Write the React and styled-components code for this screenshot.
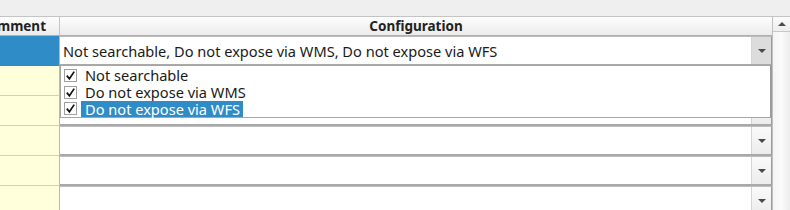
import React from "react";
import styled, { createGlobalStyle } from "styled-components";

const Global = createGlobalStyle`
  html, body { margin: 0; padding: 0; background: #efefef; }
  body { font-family: "Noto Sans", "DejaVu Sans", sans-serif; font-size: 14.6px; color: #1e1e1e; }
`;

const Page = styled.div`
  width: 790px;
  height: 210px;
  overflow: hidden;
  background: #efefef;
  padding-top: 16px;
  box-sizing: border-box;
  position: relative;
`;

const Frame = styled.div`
  display: flex;
  height: 194px;
`;

const Table = styled.div`
  flex: 1;
  display: flex;
  flex-direction: column;
  background: #ffffff;
  position: relative;
`;

const HeaderRow = styled.div`
  display: grid;
  grid-template-columns: 60px 1fr;
  height: 21px;
  box-sizing: border-box;
  border-top: 1px solid #c4c4c4;
  border-bottom: 1px solid #b0b0b0;
  background: linear-gradient(#fdfdfd, #ececec);
`;

const HeaderCell = styled.div`
  display: flex;
  align-items: center;
  justify-content: ${(p) => (p.$end ? "flex-end" : "center")};
  padding-right: ${(p) => (p.$end ? "13px" : "0")};
  border-right: ${(p) => (p.$end ? "1px solid #c4c4c4" : "none")};
  overflow: hidden;
  white-space: nowrap;
  font-weight: bold;
  font-size: 13.5px;
  color: #222;
`;

const Row = styled.div`
  display: grid;
  grid-template-columns: 60px 1fr;
  height: 30px;
  flex: none;
`;

const LeftCell = styled.div`
  background: ${(p) => (p.$selected ? "#308cc6" : "#ffffdc")};
  border-right: 1px solid #b8b8b8;
  border-bottom: 1px solid ${(p) => (p.$selected ? "#308cc6" : "#cfcfc4")};
  box-sizing: border-box;
`;

const Combo = styled.div`
  display: flex;
  box-sizing: border-box;
  background: #ffffff;
  border-top: 1px solid #bdbdbd;
  border-bottom: 2px solid #a9a9a9;
  border-right: 1px solid #9a9a9a;
`;

const ComboText = styled.div`
  flex: 1;
  display: flex;
  align-items: center;
  padding-left: 3px;
  white-space: nowrap;
  overflow: hidden;
  color: #1a1a1a;
`;

const ComboButton = styled.div`
  width: 19px;
  flex: none;
  display: flex;
  align-items: center;
  justify-content: center;
  border-left: 1px solid #d4d4d4;
  background: ${(p) => (p.$open ? "#dcdcdc" : "linear-gradient(#fafafa, #ececec)")};
`;

const Arrow = styled.div`
  width: 0;
  height: 0;
  border-left: 4px solid transparent;
  border-right: 4px solid transparent;
  border-top: 4px solid #4a4a4a;
  margin-top: 1px;
`;

const Popup = styled.div`
  position: absolute;
  left: 60px;
  right: 0;
  top: 49px;
  height: 53px;
  box-sizing: border-box;
  background: #ffffff;
  border: 1px solid #a6a6a6;
  border-right: 2px solid #9a9a9a;
  padding-top: 1px;
  display: flex;
  flex-direction: column;
`;

const Item = styled.div`
  display: flex;
  align-items: center;
  height: 16.7px;
  padding-left: 3px;
  gap: 4px;
`;

const Check = styled.div`
  width: 13px;
  height: 13px;
  box-sizing: border-box;
  border: 1px solid #a0a0a0;
  background: #fff;
  display: flex;
  align-items: center;
  justify-content: center;
  flex: none;
`;

const Label = styled.span`
  display: inline-flex;
  align-items: center;
  height: 16px;
  padding: 0 3px 0 4px;
  line-height: 16px;
  background: ${(p) => (p.$hl ? "#308cc6" : "transparent")};
  color: ${(p) => (p.$hl ? "#ffffff" : "#1a1a1a")};
`;

const Scrollbar = styled.div`
  width: 18px;
  flex: none;
  box-sizing: border-box;
  border-left: 1px solid #c0c0c0;
  border-top: 1px solid #c4c4c4;
  background: linear-gradient(90deg, #f4f4f4, #fbfbfb 50%, #ececec);
  display: flex;
  flex-direction: column;
`;

const ScrollButton = styled.div`
  height: 14px;
  border-bottom: 1px solid #c8c8c8;
  display: flex;
  align-items: center;
  justify-content: center;
  background: linear-gradient(#fbfbfb, #eeeeee);
`;

const UpArrow = styled.div`
  width: 0;
  height: 0;
  border-left: 4px solid transparent;
  border-right: 4px solid transparent;
  border-bottom: 4px solid #4a4a4a;
`;

const CheckMark = () => (
  <svg width="11" height="11" viewBox="0 0 11 11">
    <path d="M1.8 5.6 L4.4 8.8 L9.2 1.6" fill="none" stroke="#111" strokeWidth="1.7" />
  </svg>
);

const items = ["Not searchable", "Do not expose via WMS", "Do not expose via WFS"];

export default function App() {
  return (
    <>
      <Global />
      <Page>
        <Frame>
          <Table>
            <HeaderRow>
              <HeaderCell $end>Comment</HeaderCell>
              <HeaderCell>Configuration</HeaderCell>
            </HeaderRow>
            <Row>
              <LeftCell $selected />
              <Combo>
                <ComboText>Not searchable, Do not expose via WMS, Do not expose via WFS</ComboText>
                <ComboButton $open>
                  <Arrow />
                </ComboButton>
              </Combo>
            </Row>
            {[0, 1, 2, 3, 4].map((i) => (
              <Row key={i}>
                <LeftCell />
                <Combo>
                  <ComboText />
                  <ComboButton>
                    <Arrow />
                  </ComboButton>
                </Combo>
              </Row>
            ))}
            <Popup>
              {items.map((t, i) => (
                <Item key={t}>
                  <Check>
                    <CheckMark />
                  </Check>
                  <Label $hl={i === 2}>{t}</Label>
                </Item>
              ))}
            </Popup>
          </Table>
          <Scrollbar>
            <ScrollButton>
              <UpArrow />
            </ScrollButton>
          </Scrollbar>
        </Frame>
      </Page>
    </>
  );
}
